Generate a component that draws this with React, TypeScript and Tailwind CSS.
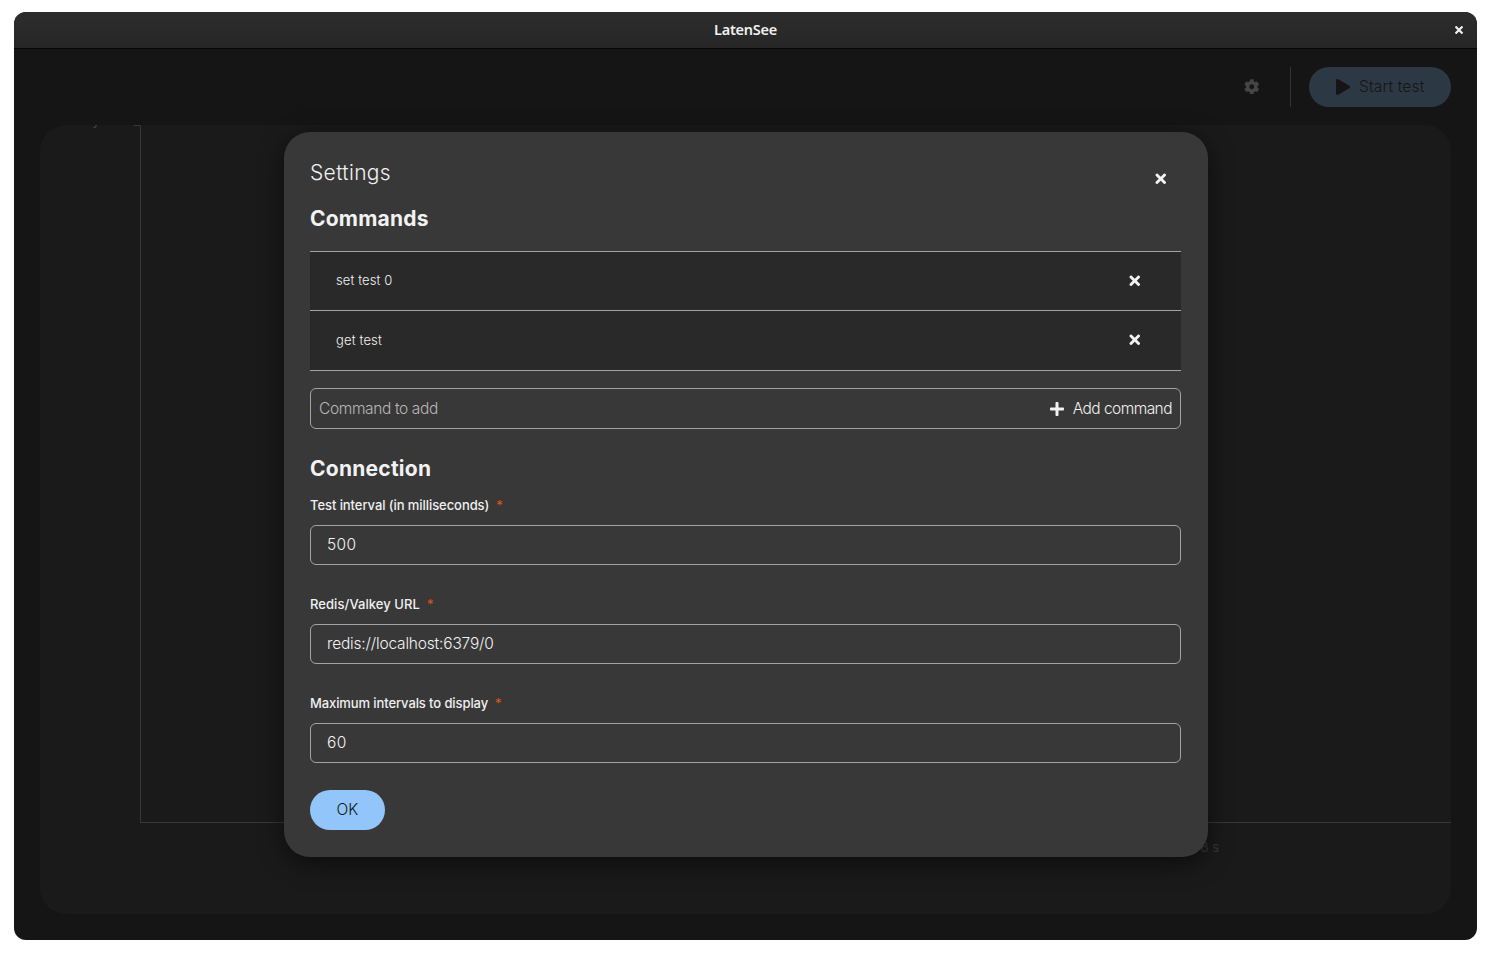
import { FaCog, FaPlay, FaPlus, FaTimes } from "react-icons/fa";

type FieldProps = { label: string; value: string; labelClass: string; valueClass: string };

function Field({ label, value, labelClass, valueClass }: FieldProps) {
  return (
    <div className="h-[99px]">
      <label className="flex h-5 items-center pt-0.5 text-[13px] font-medium text-[#f0f0f0]">
        <span className={labelClass}>{label}</span>
        <span className="ml-[7px] text-[13px] font-normal text-[#e0531f]">*</span>
      </label>
      <div className="mt-[10px] flex h-10 items-center rounded-md border border-[#a3a3a3] px-4 text-[15.5px] font-light text-[#f2f2f2]">
        <span className={valueClass}>{value}</span>
      </div>
    </div>
  );
}

function SettingsDialog() {
  return (
    <section
      role="dialog"
      className="absolute left-[270px] top-[120px] flex h-[725px] w-[924px] flex-col rounded-[26px] bg-[#383838] pl-[26px] pr-[27px] text-[#f2f2f2] shadow-[0_6px_24px_rgba(0,0,0,0.55)]"
    >
      <header className="flex h-[66px] items-start justify-between pt-[26px]">
        <h1 className="text-[21px] font-light leading-[30px] tracking-[0.35px]">Settings</h1>
        <button className="mr-[13px] mt-[13px]"><FaTimes size={15.5} /></button>
      </header>
      <h2 className="flex h-10 items-center pt-0.5 text-[21px] font-bold tracking-[0.2px] text-[#f2f2f2]">Commands</h2>
      <ul className="mt-[13px] border-t border-[#a3a3a3] text-[13px] font-light">
        <li className="flex h-[59px] items-center justify-between border-b border-[#a3a3a3] bg-[#292929] pl-[26px] pr-[39px]">
          <span className="tracking-[0.1px]">set test 0</span>
          <FaTimes size={15.5} />
        </li>
        <li className="flex h-[60px] items-center justify-between border-b border-[#a3a3a3] bg-[#292929] pl-[26px] pr-[39px]">
          <span className="tracking-[0.15px]">get test</span>
          <FaTimes size={15.5} className="-mt-[2px]" />
        </li>
      </ul>
      <div className="mt-[17px] flex h-[41px] items-center justify-between rounded-md border border-[#a3a3a3] px-2 text-[15.5px] font-light">
        <span className="tracking-[-0.37px] text-[#b8b8b8]">Command to add</span>
        <button className="flex items-center gap-2">
          <FaPlus size={16} />
          <span className="tracking-[-0.54px]">Add command</span>
        </button>
      </div>
      <h2 className="mt-[19px] flex h-10 items-center pt-0.5 text-[21px] font-bold tracking-[0.25px] text-[#f2f2f2]">Connection</h2>
      <div className="mt-[7px]">
        <Field label="Test interval (in milliseconds)" value="500" labelClass="tracking-[-0.07px]" valueClass="tracking-[0.4px]" />
        <Field label="Redis/Valkey URL" value="redis://localhost:6379/0" labelClass="tracking-[0.06px]" valueClass="tracking-[-0.18px]" />
        <Field label="Maximum intervals to display" value="60" labelClass="tracking-[-0.1px]" valueClass="tracking-[0.5px]" />
      </div>
      <button className="-mt-[2px] h-10 w-[75px] rounded-full bg-[#92c5f9] text-[15.5px] font-light text-[#151515]">OK</button>
    </section>
  );
}

export default function App() {
  return (
    <div className="h-[957px] w-[1491px] overflow-hidden bg-white px-[14px] pt-3 font-['Inter',sans-serif]">
      <main className="relative flex h-[928px] w-[1463px] flex-col overflow-hidden rounded-xl bg-[#151515]">
        <div className="grid h-[37px] shrink-0 grid-cols-[1fr_auto_1fr] items-center border-b border-[#050505] bg-linear-to-b from-[#2d2d2d] to-[#262626] font-['Noto_Sans',sans-serif] text-[14.5px] font-semibold tracking-[-0.25px] text-[#f0f0f0]">
          <span />
          <span>LatenSee</span>
          <svg className="mr-[14px] size-2 justify-self-end" viewBox="0 0 8 8" stroke="currentColor" strokeWidth="2.2">
            <path d="M.5.5l7 7M7.5.5l-7 7" />
          </svg>
        </div>
        <div className="flex h-[76px] shrink-0 items-center justify-end pr-[26px]">
          <FaCog size={15.5} className="-mt-px text-[#454545]" />
          <div className="ml-[31px] h-10 w-px bg-[#333333]" />
          <button className="ml-[18px] flex h-10 w-[142px] items-center rounded-full bg-[#2c3843] pl-[26px] text-[15.5px] font-light text-[#151515]">
            <FaPlay size={16} />
            <span className="ml-2 tracking-[0.15px]">Start test</span>
          </button>
        </div>
        <div className="ml-[26px] h-[789px] w-[1411px] overflow-hidden rounded-[26px] bg-[#1a1a1a]">
          <svg width="1411" height="789" fill="none" fontSize="13">
            <path d="M94 .5h6.500V697.500H1411" stroke="#383838" />
            <text x="52.500" y="0" fill="#484848">y</text>
            <text x="1179" y="727" textAnchor="end" fill="#383838">8 s</text>
          </svg>
        </div>
        <SettingsDialog />
      </main>
    </div>
  );
}
